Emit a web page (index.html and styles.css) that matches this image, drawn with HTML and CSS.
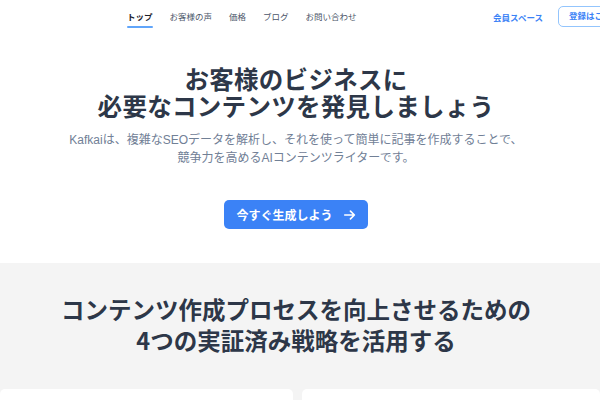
FILE: index.html
```html
<!DOCTYPE html>
<html lang="ja">
<head>
<meta charset="utf-8">
<title>Kafkai</title>
<link rel="stylesheet" href="styles.css">
</head>
<body>
<header class="site-header">
  <nav class="main-nav">
    <a class="nav-link is-active" href="#">トップ</a>
    <a class="nav-link" href="#">お客様の声</a>
    <a class="nav-link" href="#">価格</a>
    <a class="nav-link" href="#">ブログ</a>
    <a class="nav-link" href="#">お問い合わせ</a>
  </nav>
  <div class="header-actions">
    <a class="member-link" href="#">会員スペース</a>
    <a class="register-btn" href="#">登録はこちら</a>
  </div>
</header>

<section class="hero">
  <h1 class="hero-title">お客様のビジネスに<br>必要なコンテンツを発見しましょう</h1>
  <p class="hero-lead">Kafkaiは、複雑なSEOデータを解析し、それを使って簡単に記事を作成することで、<br>競争力を高めるAIコンテンツライターです。</p>
  <a class="cta-btn" href="#">今すぐ生成しよう
    <svg class="cta-arrow" viewBox="0 0 16 16" width="14" height="14" aria-hidden="true">
      <path d="M2 8h11M8.5 3.5L13 8l-4.5 4.5" fill="none" stroke="#fff" stroke-width="1.9" stroke-linecap="round" stroke-linejoin="round"/>
    </svg>
  </a>
</section>

<section class="strategies">
  <h2 class="strategies-title">コンテンツ作成プロセスを向上させるための<br>4つの実証済み戦略を活用する</h2>
  <div class="cards">
    <div class="card"></div>
    <div class="card"></div>
  </div>
</section>
</body>
</html>
```

FILE: styles.css
```css
html, body {
  margin: 0;
  padding: 0;
  overflow: hidden;
  background: #ffffff;
}

body {
  font-family: "Liberation Sans", "Noto Sans CJK JP", sans-serif;
  color: #2d3748;
}

a {
  text-decoration: none;
}

.site-header {
  display: flex;
  align-items: center;
  height: 33px;
  width: 600px;
  overflow: hidden;
}

.main-nav {
  display: flex;
  align-items: center;
  gap: 17px;
  margin-left: 127px;
}

.nav-link {
  font-size: 8.5px;
  color: #4a5568;
  line-height: 12px;
  position: relative;
  white-space: nowrap;
}

.nav-link.is-active {
  color: #1a202c;
  font-weight: bold;
}

.nav-link.is-active::after {
  content: "";
  position: absolute;
  left: 0;
  right: 0;
  bottom: -5px;
  height: 2px;
  border-radius: 1px;
  background: #60a5fa;
}

.header-actions {
  display: flex;
  align-items: center;
  gap: 15px;
  margin-left: auto;
  margin-right: -31px;
}

.member-link {
  font-size: 8.5px;
  font-weight: bold;
  color: #3b82f6;
  white-space: nowrap;
}

.register-btn {
  font-size: 8.5px;
  font-weight: bold;
  color: #3b82f6;
  border: 1px solid #93c5fd;
  border-radius: 5px;
  padding: 4px 10px;
  line-height: 11px;
  white-space: nowrap;
}

.hero {
  text-align: center;
  padding: 32px 8px 34px 0;
}

.hero-title {
  margin: 0;
  font-family: "Noto Sans CJK JP", sans-serif;
  font-size: 24.5px;
  letter-spacing: 0.3px;
  line-height: 27px;
  font-weight: bold;
  color: #2d3748;
}

.hero-lead {
  margin: 12px 0 0;
  font-size: 12px;
  line-height: 18px;
  color: #718096;
}

.cta-btn {
  display: inline-flex;
  align-items: center;
  gap: 10px;
  margin-top: 33px;
  height: 29px;
  padding: 0 11px 0 12px;
  border-radius: 5px;
  background: #3b82f6;
  color: #ffffff;
  font-size: 12px;
  font-weight: bold;
}

.cta-arrow {
  display: block;
}

.strategies {
  background: #f4f4f4;
  padding: 31px 0 0;
}

.strategies-title {
  margin: 0 8px 0 0;
  text-align: center;
  font-family: "Noto Sans CJK JP", sans-serif;
  font-size: 23.5px;
  line-height: 31px;
  font-weight: bold;
  color: #2d3748;
}

.cards {
  display: grid;
  grid-template-columns: 293px 1fr;
  gap: 9px;
  margin-top: 33px;
}

.card {
  height: 120px;
  background: #ffffff;
  border-radius: 5px 5px 0 0;
}
```
